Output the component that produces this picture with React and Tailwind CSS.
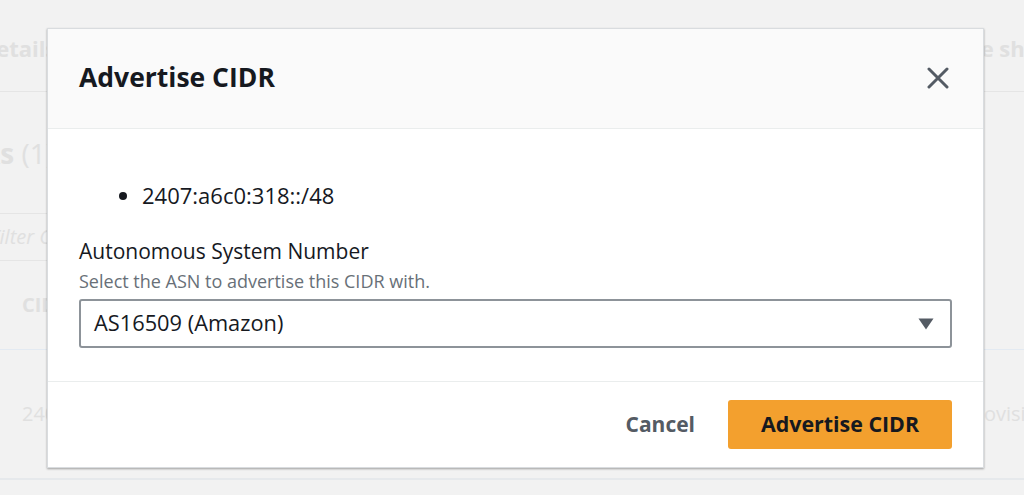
export default function App() {
  return (
    <div className="relative w-[1024px] h-[495px] overflow-hidden bg-[#f2f2f2] font-['Open_Sans',sans-serif]">
      {/* background page */}
      <div className="flex flex-col text-[#e0e0e0]">
        <div className="h-[92px] border-b border-[#e5e5e5] flex items-start pt-[32px]">
          <span className="ml-[-20px] text-[22px] font-bold">Details</span>
          <span className="ml-[872px] text-[22px] font-bold whitespace-nowrap">Route sharing</span>
        </div>
        <div className="h-[121px] flex items-center">
          <span className="ml-[-66px] text-[28px] font-bold whitespace-nowrap">CIDRs <span className="font-normal">(1)</span></span>
        </div>
        <div className="w-[600px] h-[48px] border-y border-[#e5e5e5] flex items-center">
          <span className="ml-[-10px] text-[20px] italic">Filter CIDRs</span>
        </div>
        <div className="h-[89px] border-b border-[#e3eaf2] flex items-center">
          <span className="ml-[22px] text-[20px] font-bold">CIDR</span>
        </div>
        <div className="h-[130px] border-b-2 border-[#e6e9ec] flex items-center">
          <span className="ml-[22px] text-[20px]">2407</span>
          <span className="ml-[896px] text-[20px] whitespace-nowrap">Provisioned</span>
        </div>
      </div>

      {/* modal */}
      <div className="absolute left-[47px] top-[28px] w-[937px] h-[440px] bg-white border border-[#d9dcdf] shadow-[0_1px_2px_rgba(0,0,0,0.35)] flex flex-col">
        <div className="h-[100px] shrink-0 bg-[#fafafa] border-b border-[#eaeded] flex items-center justify-between pl-[31px] pr-[34px]">
          <h1 className="text-[26.5px] font-bold text-[#16191f] leading-none mt-[-2px]">Advertise CIDR</h1>
          <svg width="22" height="22" viewBox="0 0 22 22" className="mt-[-2px]">
            <path d="M2 2 L20 20 M20 2 L2 20" stroke="#545b64" strokeWidth="3" strokeLinecap="round" />
          </svg>
        </div>
        <div className="h-[252px] shrink-0 px-[31px] flex flex-col">
          <ul className="mt-[50px] list-disc pl-[63px] text-[22px] leading-[32px] text-[#16191f]">
            <li>2407:a6c0:318::/48</li>
          </ul>
          <div className="mt-[25px] text-[21px] leading-[30px] text-[#16191f]">Autonomous System Number</div>
          <div className="mt-[4px] text-[18px] leading-[22px] text-[#687078]">Select the ASN to advertise this CIDR with.</div>
          <div className="mt-[7px] h-[49px] border-2 border-[#8d9399] rounded-[3px] flex items-center justify-between pl-[13px] pr-[16px]">
            <span className="text-[21.8px] text-[#16191f]">AS16509 (Amazon)</span>
            <svg width="16" height="12" viewBox="0 0 16 12">
              <path d="M0.5 0.5 L15.5 0.5 L8 11.5 Z" fill="#545b64" />
            </svg>
          </div>
        </div>
        <div className="flex-1 border-t border-[#eaeded] flex items-center justify-end pr-[31px]">
          <span className="text-[21px] font-bold text-[#545b64] mr-[33px]">Cancel</span>
          <button className="w-[224px] h-[49px] bg-[#f3a02e] rounded-[3px] text-[21.4px] font-bold text-[#16191f]">Advertise CIDR</button>
        </div>
      </div>
    </div>
  );
}
